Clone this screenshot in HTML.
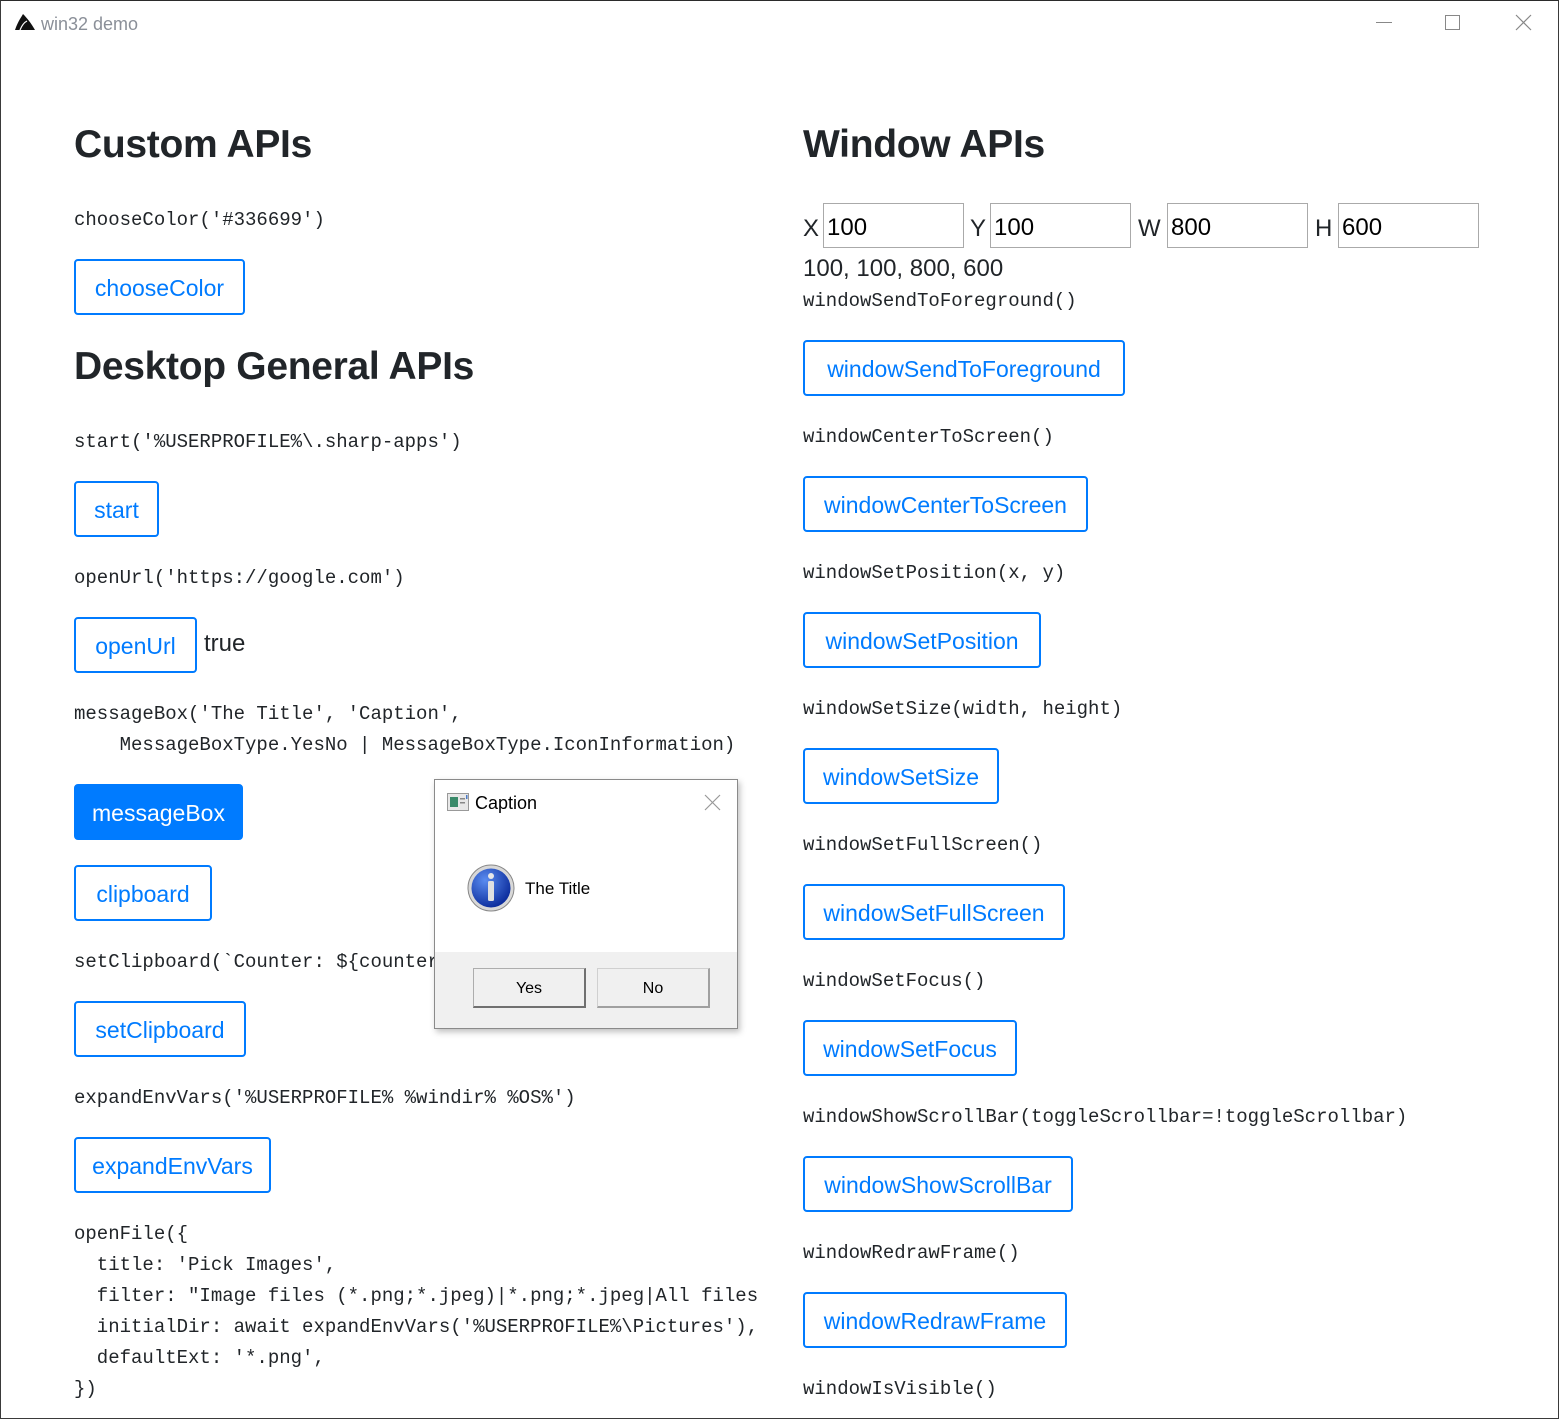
<!DOCTYPE html>
<html><head><meta charset="utf-8"><style>
*{margin:0;padding:0;box-sizing:border-box}
body{width:1559px;height:1419px;position:relative;background:#fff;overflow:hidden;font-family:"Liberation Sans",sans-serif;color:#212529}
.frame{position:absolute;left:0;top:0;width:1559px;height:1419px;border:1px solid #3a3a3a;border-top-color:#2b2b2b}
.t{position:absolute;white-space:nowrap}
.c{position:absolute;white-space:pre;font-family:"Liberation Mono",monospace;font-size:19px;line-height:24px;color:#212529;margin-top:2px}
.h{position:absolute;font-size:39px;font-weight:bold;line-height:48px;white-space:nowrap;color:#212529;letter-spacing:-0.3px}
.b{position:absolute;height:56px;border:2px solid #007bff;border-radius:4px;color:#007bff;font-size:23px;line-height:54px;text-align:center;white-space:nowrap;background:#fff}
.b.p{background:#007bff;color:#fff}
.in{position:absolute;top:203px;height:45px;border:1px solid #aaa;font-size:24px;line-height:47px;padding-left:3px;color:#000}
.lbl{position:absolute;top:214px;font-size:24px;line-height:30px;color:#212529}
.clipL{position:absolute;left:0;top:0;width:758px;height:1419px;overflow:hidden}
</style></head><body>
<div class="frame"></div>
<svg class="t" style="left:14px;top:13px" width="22" height="18" viewBox="0 0 22 18"><path d="M1 17 C4 8 8 3 9 1 C13 5 17 10 21 17 Z" fill="#111"/><path d="M6 17 C8 12 11 9 13 8" stroke="#fff" stroke-width="1.2" fill="none"/></svg>
<div class="t" style="left:41px;top:12px;font-size:18px;line-height:24px;color:#8a8f98">win32 demo</div>
<div class="t" style="left:1376px;top:22px;width:16px;height:1px;background:#888"></div>
<div class="t" style="left:1445px;top:15px;width:15px;height:15px;border:1px solid #888"></div>
<svg class="t" style="left:1515px;top:14px" width="17" height="17"><path d="M1 1L16 16M16 1L1 16" stroke="#888" stroke-width="1.2"/></svg>

<div class="clipL">
<div class="h" style="left:74px;top:121px">Custom APIs</div>
<div class="c" style="left:74px;top:206px">chooseColor('#336699')</div>
<div class="b" style="left:74px;top:259px;width:171px">chooseColor</div>
<div class="h" style="left:74px;top:343px">Desktop General APIs</div>
<div class="c" style="left:74px;top:428px">start('%USERPROFILE%\.sharp-apps')</div>
<div class="b" style="left:74px;top:481px;width:85px">start</div>
<div class="c" style="left:74px;top:564px">openUrl('https://google.com')</div>
<div class="b" style="left:74px;top:617px;width:123px">openUrl</div>
<div class="t" style="left:204px;top:630px;font-size:24px;line-height:28px">true</div>
<div class="c" style="left:74px;top:700px">messageBox('The Title', 'Caption',</div>
<div class="c" style="left:74px;top:731px">    MessageBoxType.YesNo | MessageBoxType.IconInformation)</div>
<div class="b p" style="left:74px;top:784px;width:169px">messageBox</div>
<div class="b" style="left:74px;top:865px;width:138px">clipboard</div>
<div class="c" style="left:74px;top:948px">setClipboard(`Counter: ${counter}`)</div>
<div class="b" style="left:74px;top:1001px;width:172px">setClipboard</div>
<div class="c" style="left:74px;top:1084px">expandEnvVars('%USERPROFILE% %windir% %OS%')</div>
<div class="b" style="left:74px;top:1137px;width:197px">expandEnvVars</div>
<div class="c" style="left:74px;top:1220px">openFile({</div>
<div class="c" style="left:74px;top:1251px">  title: 'Pick Images',</div>
<div class="c" style="left:74px;top:1282px">  filter: "Image files (*.png;*.jpeg)|*.png;*.jpeg|All files (*.*)|*.*",</div>
<div class="c" style="left:74px;top:1313px">  initialDir: await expandEnvVars('%USERPROFILE%\Pictures'),</div>
<div class="c" style="left:74px;top:1344px">  defaultExt: '*.png',</div>
<div class="c" style="left:74px;top:1375px">})</div>
</div>

<div class="h" style="left:803px;top:121px">Window APIs</div>
<div class="lbl" style="left:803px">X</div><div class="in" style="left:823px;width:141px">100</div>
<div class="lbl" style="left:970px">Y</div><div class="in" style="left:990px;width:141px">100</div>
<div class="lbl" style="left:1138px">W</div><div class="in" style="left:1167px;width:141px">800</div>
<div class="lbl" style="left:1315px">H</div><div class="in" style="left:1338px;width:141px">600</div>
<div class="t" style="left:803px;top:255px;font-size:24px;line-height:28px">100, 100, 800, 600</div>
<div class="c" style="left:803px;top:287px">windowSendToForeground()</div>
<div class="b" style="left:803px;top:340px;width:322px">windowSendToForeground</div>
<div class="c" style="left:803px;top:423px">windowCenterToScreen()</div>
<div class="b" style="left:803px;top:476px;width:285px">windowCenterToScreen</div>
<div class="c" style="left:803px;top:559px">windowSetPosition(x, y)</div>
<div class="b" style="left:803px;top:612px;width:238px">windowSetPosition</div>
<div class="c" style="left:803px;top:695px">windowSetSize(width, height)</div>
<div class="b" style="left:803px;top:748px;width:196px">windowSetSize</div>
<div class="c" style="left:803px;top:831px">windowSetFullScreen()</div>
<div class="b" style="left:803px;top:884px;width:262px">windowSetFullScreen</div>
<div class="c" style="left:803px;top:967px">windowSetFocus()</div>
<div class="b" style="left:803px;top:1020px;width:214px">windowSetFocus</div>
<div class="c" style="left:803px;top:1103px">windowShowScrollBar(toggleScrollbar=!toggleScrollbar)</div>
<div class="b" style="left:803px;top:1156px;width:270px">windowShowScrollBar</div>
<div class="c" style="left:803px;top:1239px">windowRedrawFrame()</div>
<div class="b" style="left:803px;top:1292px;width:264px">windowRedrawFrame</div>
<div class="c" style="left:803px;top:1375px">windowIsVisible()</div>

<div class="t" style="left:434px;top:779px;width:304px;height:250px;border:1px solid #8a8a8a;background:#fff;box-shadow:2px 3px 6px rgba(0,0,0,.25)">
  <div class="t" style="left:0;top:172px;width:302px;height:76px;background:#f0f0f0"></div>
  <svg class="t" style="left:12px;top:13px" width="22" height="18"><rect x="0.5" y="0.5" width="21" height="17" fill="#e8e8e8" stroke="#999"/><rect x="3" y="4" width="8" height="10" fill="#3a8a6a"/><rect x="13" y="5" width="5" height="1.5" fill="#888"/><rect x="13" y="9" width="5" height="1.5" fill="#888"/><rect x="19" y="2" width="1.5" height="4" fill="#4a7ac8"/></svg>
  <div class="t" style="left:40px;top:12px;font-size:18px;line-height:22px;color:#000">Caption</div>
  <svg class="t" style="left:269px;top:14px" width="17" height="17"><path d="M1 1L16 16M16 1L1 16" stroke="#999" stroke-width="1.2"/></svg>
  <svg class="t" style="left:32px;top:84px" width="48" height="48" viewBox="0 0 48 48"><defs><radialGradient id="g" cx="35%" cy="30%" r="75%"><stop offset="0" stop-color="#5a8cf0"/><stop offset="1" stop-color="#0a2a9a"/></radialGradient></defs><circle cx="24" cy="24" r="23" fill="#d8d8d8" stroke="#888"/><circle cx="24" cy="24" r="19.5" fill="url(#g)"/><circle cx="24" cy="12" r="3" fill="#e8e8e8"/><rect x="21" y="17" width="6" height="20" rx="1.5" fill="#e0e0e0"/></svg>
  <div class="t" style="left:90px;top:98px;font-size:17px;line-height:22px;color:#000">The Title</div>
  <div class="t" style="left:38px;top:188px;width:113px;height:40px;background:#f0f0f0;border:1px solid #adadad;border-right:2px solid #707070;border-bottom:2px solid #707070;font-size:16px;line-height:39px;text-align:center;color:#000">Yes</div>
  <div class="t" style="left:162px;top:188px;width:113px;height:40px;background:#f0f0f0;border:1px solid #d0d0d0;border-right:2px solid #a0a0a0;border-bottom:2px solid #a0a0a0;font-size:16px;line-height:39px;text-align:center;color:#000">No</div>
</div>
</body></html>
